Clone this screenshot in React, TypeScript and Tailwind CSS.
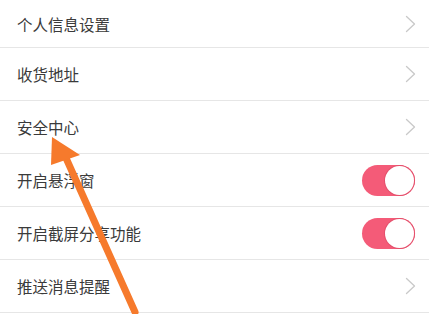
import React from "react";

type Row = { label: string; kind: "link" | "toggle" };

const rows: Row[] = [
  { label: "个人信息设置", kind: "link" },
  { label: "收货地址", kind: "link" },
  { label: "安全中心", kind: "link" },
  { label: "开启悬浮窗", kind: "toggle" },
  { label: "开启截屏分享功能", kind: "toggle" },
  { label: "推送消息提醒", kind: "link" },
];

function Chevron() {
  return (
    <svg width="11" height="18" viewBox="0 0 11 18" fill="none">
      <path d="M1.5 1.5 L9.5 9 L1.5 16.5" stroke="#c9c9c9" strokeWidth="1.3" strokeLinecap="round" strokeLinejoin="round" />
    </svg>
  );
}

function Toggle() {
  return (
    <div className="w-[53px] h-[31px] rounded-full bg-[#f45b78] p-[1px] flex justify-end">
      <div className="w-[29px] h-[29px] rounded-full bg-white shadow-[0_0_0_1px_#e4506c]" />
    </div>
  );
}

export default function App() {
  return (
    <div
      className="relative w-[429px] h-[314px] overflow-hidden bg-white"
      style={{ fontFamily: '"Noto Sans CJK SC", "Noto Sans", sans-serif' }}
    >
      <div className="flex flex-col">
        {rows.map((row, i) => (
          <div
            key={row.label}
            className={`flex items-center justify-between border-b border-[#e6e6e6] pl-[17px] ${
              i === 0 ? "h-[48px]" : "h-[53px]"
            } ${row.kind === "link" ? "pr-[13px]" : "pr-[14px]"}`}
          >
            <span className="text-[15.5px] text-[#3a3a3a] pt-[2px]">{row.label}</span>
            {row.kind === "link" ? <Chevron /> : <Toggle />}
          </div>
        ))}
      </div>

      {/* orange annotation arrow */}
      <svg className="absolute inset-0 pointer-events-none" width="429" height="314" viewBox="0 0 429 314">
        <line x1="66" y1="158" x2="135" y2="312" stroke="#f67a2c" strokeWidth="7" strokeLinecap="round" />
        <polygon points="52,137 51,165 80,155" fill="#f67a2c" />
      </svg>
    </div>
  );
}
